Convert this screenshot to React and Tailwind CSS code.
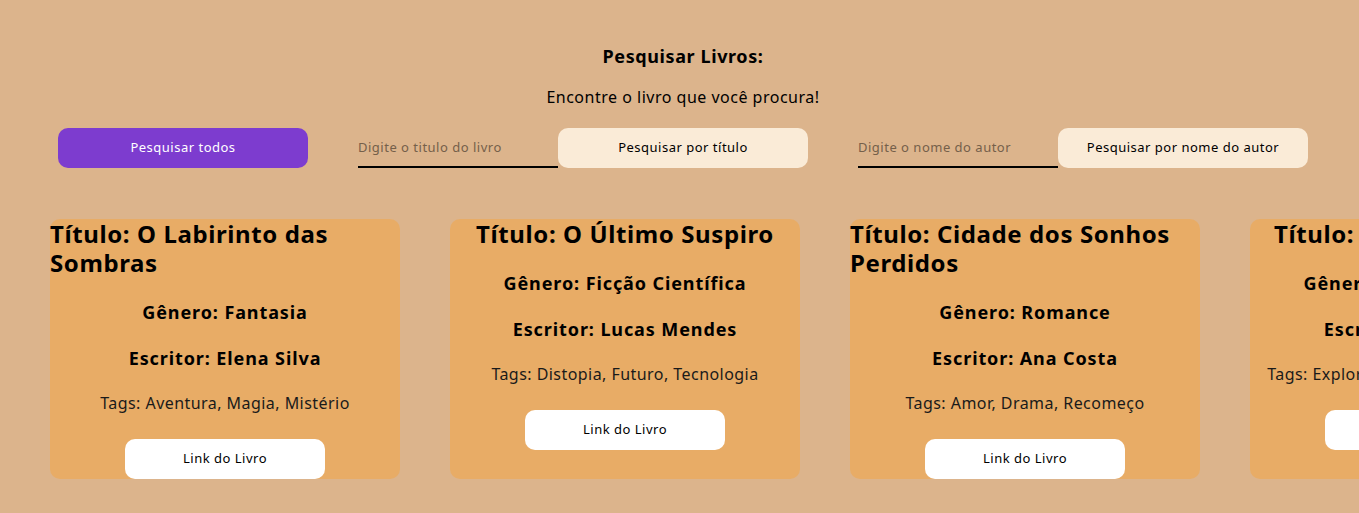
import React from "react";

const books = [
  { titulo: "O Labirinto das Sombras", genero: "Fantasia", escritor: "Elena Silva", tags: "Aventura, Magia, Mistério" },
  { titulo: "O Último Suspiro", genero: "Ficção Científica", escritor: "Lucas Mendes", tags: "Distopia, Futuro, Tecnologia" },
  { titulo: "Cidade dos Sonhos Perdidos", genero: "Romance", escritor: "Ana Costa", tags: "Amor, Drama, Recomeço" },
  { titulo: "A Jornada Estelar", genero: "Ficção Científica", escritor: "Pedro Alves", tags: "Exploração, Espaço, Sobrevivência" },
];

function Card({ b }) {
  return (
    <div className="w-[350px] shrink-0 bg-[#e8ac66] rounded-[10px] flex flex-col items-center">
      <h2 className="text-[24px] leading-[29px] font-bold tracking-[0.6px] text-black">Título: {b.titulo}</h2>
      <h3 className="mt-6 text-[18px] leading-[22px] font-bold tracking-[0.9px] text-black text-center">Gênero: {b.genero}</h3>
      <h3 className="mt-6 text-[18px] leading-[22px] font-bold tracking-[0.9px] text-black text-center">Escritor: {b.escritor}</h3>
      <p className="mt-6 text-[16px] leading-[20px] tracking-[0.45px] text-[#1a1a1a] text-center whitespace-nowrap">Tags: {b.tags}</p>
      <button className="mt-[26px] w-[200px] h-[40px] shrink-0 bg-white rounded-[10px] text-[13px] tracking-[0.5px] text-black">Link do Livro</button>
    </div>
  );
}

export default function App() {
  return (
    <div className="w-full min-h-[513px] bg-[#dcb48c] overflow-hidden" style={{ fontFamily: '"Noto Sans", "Open Sans", sans-serif' }}>
      <div className="w-[1366px] flex flex-col">
        <div className="flex flex-col items-center pt-[44px]">
          <h1 className="text-[18px] leading-[24px] font-bold tracking-[0.6px] text-black">Pesquisar Livros:</h1>
          <p className="mt-[19px] text-[16px] leading-[20px] tracking-[0.5px] text-black">Encontre o livro que você procura!</p>
        </div>
        <div className="mt-[21px] flex justify-center items-start gap-[50px]">
          <button className="w-[250px] h-[40px] rounded-[10px] bg-[#7d3ccf] text-white text-[13px] tracking-[0.5px]">Pesquisar todos</button>
          <div className="flex">
            <input className="w-[200px] h-[40px] bg-transparent border-b-2 border-black outline-none text-[13px] tracking-[0.5px] placeholder:text-[#75604a]" placeholder="Digite o titulo do livro" />
            <button className="w-[250px] h-[40px] rounded-[10px] bg-[#faebd7] text-black text-[13px] tracking-[0.5px]">Pesquisar por título</button>
          </div>
          <div className="flex">
            <input className="w-[200px] h-[40px] bg-transparent border-b-2 border-black outline-none text-[13px] tracking-[0.5px] placeholder:text-[#75604a]" placeholder="Digite o nome do autor" />
            <button className="w-[250px] h-[40px] rounded-[10px] bg-[#faebd7] text-black text-[13px] tracking-[0.5px]">Pesquisar por nome do autor</button>
          </div>
        </div>
        <div className="mt-[51px] pl-[50px] flex gap-[50px] items-stretch">
          {books.map((b) => (
            <Card key={b.titulo} b={b} />
          ))}
        </div>
      </div>
    </div>
  );
}
